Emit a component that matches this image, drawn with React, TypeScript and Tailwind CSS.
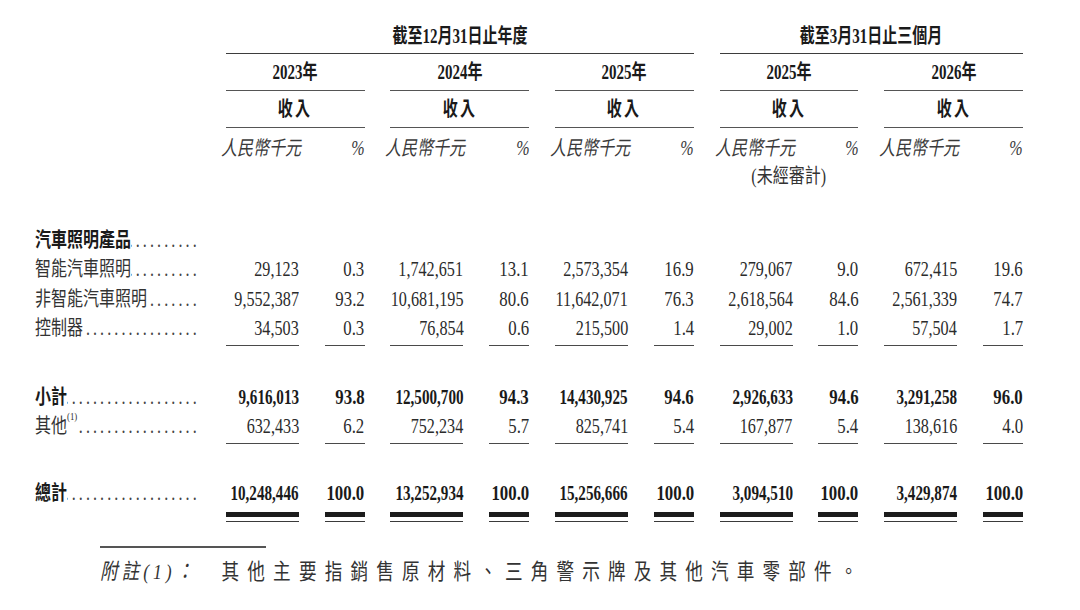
import React from 'react'

// Revenue breakdown table (prospectus style), condensed serif look
const GRID = 'grid grid-cols-[165px_repeat(5,73px_40px)] gap-x-[25.8px]'

type Row = {
  label: string
  sup?: boolean
  bold?: boolean
  values: string[]
}

const YEARS = ['2023年', '2024年', '2025年', '2025年', '2026年']

const PRODUCT_ROWS: Row[] = [
  {
    label: '智能汽車照明',
    values: ['29,123', '0.3', '1,742,651', '13.1', '2,573,354', '16.9', '279,067', '9.0', '672,415', '19.6'],
  },
  {
    label: '非智能汽車照明',
    values: ['9,552,387', '93.2', '10,681,195', '80.6', '11,642,071', '76.3', '2,618,564', '84.6', '2,561,339', '74.7'],
  },
  {
    label: '控制器',
    values: ['34,503', '0.3', '76,854', '0.6', '215,500', '1.4', '29,002', '1.0', '57,504', '1.7'],
  },
]

const SUB_ROWS: Row[] = [
  {
    label: '小計',
    bold: true,
    values: ['9,616,013', '93.8', '12,500,700', '94.3', '14,430,925', '94.6', '2,926,633', '94.6', '3,291,258', '96.0'],
  },
  {
    label: '其他',
    sup: true,
    values: ['632,433', '6.2', '752,234', '5.7', '825,741', '5.4', '167,877', '5.4', '138,616', '4.0'],
  },
]

const TOTAL: Row = {
  label: '總計',
  bold: true,
  values: ['10,248,446', '100.0', '13,252,934', '100.0', '15,256,666', '100.0', '3,094,510', '100.0', '3,429,874', '100.0'],
}

function Sq({ children, className = 'scale-x-[0.8]' }: { children: React.ReactNode; className?: string }) {
  return <span className={`inline-block shrink-0 whitespace-nowrap ${className}`}>{children}</span>
}

function Label({ row }: { row: Row }) {
  return (
    <div className="flex w-[206px] origin-left scale-x-[0.8] text-[20px] leading-[24px]">
      <span className={`whitespace-nowrap ${row.bold ? 'font-bold text-[#1a1a1a]' : 'text-[#333]'}`}>
        {row.label}
        {row.sup && <sup className="text-[11px] font-['Liberation_Serif'] align-[8px]">(1)</sup>}
      </span>
      <span className="flex flex-1 justify-end overflow-hidden whitespace-nowrap font-['Liberation_Serif'] text-[#444] tracking-[3.9px]">
        {'.'.repeat(40)}
      </span>
    </div>
  )
}

function DataRow({ row }: { row: Row }) {
  return (
    <div className={`${GRID} h-[29.3px] items-center`}>
      <Label row={row} />
      {row.values.map((v, i) => {
        const isAmount = i % 2 === 0
        const scale = !isAmount ? 'scale-x-[0.8]' : row.bold ? 'scale-x-[0.72]' : 'scale-x-[0.77]'
        return (
          <div
            key={i}
            className={`flex justify-end text-[21px] leading-[24px] ${row.bold ? 'font-bold text-[#1a1a1a]' : 'text-[#2b2b2b]'}`}
          >
            <Sq className={`origin-right ${scale}`}>{v}</Sq>
          </div>
        )
      })}
    </div>
  )
}

function RuleRow() {
  return (
    <div className={`${GRID} mt-[2px]`}>
      <div />
      {Array.from({ length: 10 }).map((_, i) => (
        <div key={i} className="h-[1.5px] bg-[#4a4a4a]" />
      ))}
    </div>
  )
}

function DoubleRuleRow() {
  return (
    <div className={`${GRID} mt-[4px]`}>
      <div />
      {Array.from({ length: 10 }).map((_, i) => (
        <div key={i} className="flex flex-col">
          <div className="h-[5px] bg-[#1c1c1c]" />
          <div className="mt-[4px] h-[1.5px] bg-[#3a3a3a]" />
        </div>
      ))}
    </div>
  )
}

export default function App() {
  return (
    <div className="w-[1080px] h-[610px] overflow-hidden bg-white pl-[35px] font-['Liberation_Serif','Noto_Sans_CJK_TC',serif] text-[#222]">
      {/* period headings */}
      <div className={`${GRID} h-[54px]`}>
        <div className="col-start-2 col-span-6 flex items-end justify-center border-b-[1.5px] border-[#3d3d3d] pb-[5px] text-[20px] font-bold leading-[24px] text-[#1a1a1a]">
          <Sq className="scale-x-[0.75]">截至12月31日止年度</Sq>
        </div>
        <div className="col-start-8 col-span-4 flex items-end justify-center border-b-[1.5px] border-[#3d3d3d] pb-[5px] text-[20px] font-bold leading-[24px] text-[#1a1a1a]">
          <Sq className="scale-x-[0.75]">截至3月31日止三個月</Sq>
        </div>
      </div>

      {/* years */}
      <div className={`${GRID} h-[37px]`}>
        <div />
        {YEARS.map((y, i) => (
          <div
            key={i}
            className="col-span-2 flex items-center justify-center border-b-[1.5px] border-[#555] text-[20px] font-bold leading-[24px] text-[#1a1a1a]"
          >
            <Sq className="scale-x-[0.75]">{y}</Sq>
          </div>
        ))}
      </div>

      {/* 收入 */}
      <div className={`${GRID} h-[37px]`}>
        <div />
        {YEARS.map((_, i) => (
          <div
            key={i}
            className="col-span-2 flex items-center justify-center border-b-[1.5px] border-[#555] text-[20px] font-bold leading-[24px] tracking-[3px] text-[#1a1a1a]"
          >
            <Sq className="scale-x-[0.75]">收入</Sq>
          </div>
        ))}
      </div>

      {/* units */}
      <div className={`${GRID} h-[36px] pt-[8px] text-[20px] italic leading-[24px] text-[#3a3a3a]`}>
        <div />
        {YEARS.map((_, i) => (
          <React.Fragment key={i}>
            <div className="-ml-[5px]">
              <Sq className="origin-left scale-x-[0.8]">人民幣千元</Sq>
            </div>
            <div className="flex justify-end">
              <Sq className="origin-right scale-x-[0.8]">%</Sq>
            </div>
          </React.Fragment>
        ))}
      </div>
      <div className={`${GRID} h-[24px] text-[20px] leading-[24px] text-[#333]`}>
        <div className="col-start-8 col-span-2 text-center">
          <Sq>(未經審計)</Sq>
        </div>
      </div>

      {/* product rows */}
      <div className="mt-[37.4px]">
        <div className={`${GRID} h-[29.3px] items-center`}>
          <Label row={{ label: '汽車照明產品', bold: true, values: [] }} />
        </div>
        {PRODUCT_ROWS.map((r) => (
          <DataRow key={r.label} row={r} />
        ))}
      </div>
      <RuleRow />

      <div className="mt-[36.2px]">
        {SUB_ROWS.map((r) => (
          <DataRow key={r.label} row={r} />
        ))}
      </div>
      <RuleRow />

      <div className="mt-[33.9px]">
        <DataRow row={TOTAL} />
      </div>
      <DoubleRuleRow />

      {/* footnote */}
      <div className="ml-[65px] mt-[24px]">
        <div className="h-[1.5px] w-[166px] bg-[#555]" />
        <div className="mt-[10.5px] flex w-[1100px] origin-left scale-x-[0.8] text-[22px] leading-[28px] text-[#333]">
          <span className="w-[152px] whitespace-nowrap italic tracking-[5px]">附註(1)：</span>
          <span className="whitespace-nowrap tracking-[10.2px]">其他主要指銷售原材料、三角警示牌及其他汽車零部件。</span>
        </div>
      </div>
    </div>
  )
}
